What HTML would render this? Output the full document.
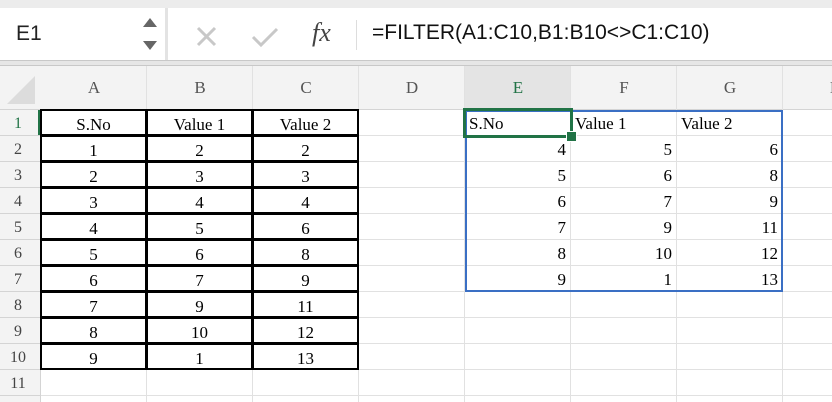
<!DOCTYPE html><html><head><style>
body{margin:0;width:832px;height:402px;overflow:hidden;background:#fff;font-family:"Liberation Serif",serif;position:relative}
.a{position:absolute}
.c{position:absolute;height:26px;line-height:28px;font-size:17px;color:#000;box-sizing:border-box}
</style></head><body>
<div class="a" style="left:0;top:0;width:832px;height:8px;background:#ececec"></div>
<div class="a" style="left:0;top:8px;width:832px;height:52px;background:#fff"></div>
<div class="a" style="left:165px;top:8px;width:3px;height:52px;background:#e3e3e3"></div>
<div class="a" style="left:0;top:60px;width:832px;height:6px;background:#e6e6e6;border-top:1px solid #c8c8c8;border-bottom:1px solid #c8c8c8;box-sizing:border-box"></div>
<div class="a" style="left:16px;top:22px;font:21px 'Liberation Sans',sans-serif;color:#222">E1</div>
<svg class="a" style="left:140px;top:14px" width="20" height="40"><path d="M3 13 L10 4 L17 13Z M3 27 L10 36 L17 27Z" fill="#666"/></svg>
<svg class="a" style="left:195px;top:25px" width="24" height="24"><path d="M3 3 L20 20 M20 3 L3 20" stroke="#c8c8c8" stroke-width="3"/></svg>
<svg class="a" style="left:250px;top:25px" width="30" height="24"><path d="M3 12 L11 20 L27 4" stroke="#c8c8c8" stroke-width="3" fill="none"/></svg>
<div class="a" style="left:312px;top:18px;font:italic 26px 'Liberation Serif',serif;color:#444">fx</div>
<div class="a" style="left:356px;top:20px;width:1px;height:30px;background:#ddd"></div>
<div class="a" style="left:372px;top:21px;font:21px 'Liberation Sans',sans-serif;color:#111">=FILTER(A1:C10,B1:B10&lt;&gt;C1:C10)</div>
<div class="a" style="left:0;top:66px;width:832px;height:44px;background:#f3f3f3;border-bottom:1px solid #d4d4d4;box-sizing:border-box"></div>
<div class="a" style="left:0;top:110px;width:41px;height:292px;background:#f3f3f3;border-right:1px solid #d4d4d4;box-sizing:border-box"></div>
<svg class="a" style="left:5px;top:74px" width="32" height="32"><path d="M30 2 L30 30 L2 30Z" fill="#dcdcdc"/></svg>
<div class="a" style="left:465px;top:66px;width:106px;height:44px;background:#e4e4e4;border-bottom:2px solid #217346;box-sizing:border-box"></div>
<div class="a" style="left:38px;top:110px;width:3px;height:26px;background:#217346"></div>
<div id="g"></div>
<script>
var h='';var cols=[41,147,253,359,465,571,677,783,889];var L='ABCDEFGH';
for(var i=0;i<8;i++){h+='<div class="a" style="left:'+cols[i]+'px;top:66px;width:106px;height:44px;line-height:44px;text-align:center;font-size:17px;color:'+(i==4?'#217346':'#555')+'">'+L[i]+'</div>';
h+='<div class="a" style="left:'+(cols[i+1]-1)+'px;top:66px;width:1px;height:336px;background:#e1e1e1"></div>';}
for(var r=0;r<11;r++){var y=110+r*26;h+='<div class="a" style="left:41px;top:'+(y+25)+'px;width:791px;height:1px;background:#e1e1e1"></div>';
h+='<div class="a" style="left:0;top:'+y+'px;width:36px;height:26px;line-height:28px;text-align:center;font-size:16px;color:'+(r==0?'#217346':'#444')+'">'+(r+1)+'</div>';
h+='<div class="a" style="left:0;top:'+(y+25)+'px;width:41px;height:1px;background:#d4d4d4"></div>';}
var A=[['S.No','Value 1','Value 2'],[1,2,2],[2,3,3],[3,4,4],[4,5,6],[5,6,8],[6,7,9],[7,9,11],[8,10,12],[9,1,13]];
for(var r=0;r<10;r++)for(var c=0;c<3;c++){h+='<div class="c" style="left:'+(cols[c]-1)+'px;top:'+(109+r*26)+'px;width:107px;height:27px;border:2px solid #000;text-align:center">'+A[r][c]+'</div>';}
var B=[['S.No','Value 1','Value 2'],[4,5,6],[5,6,8],[6,7,9],[7,9,11],[8,10,12],[9,1,13]];
for(var r=0;r<7;r++)for(var c=0;c<3;c++){h+='<div class="c" style="left:'+(cols[c+4]+4)+'px;top:'+(110+r*26)+'px;width:97px;text-align:'+(r?'right':'left')+'">'+B[r][c]+'</div>';}
h+='<div class="a" style="left:465px;top:110px;width:318px;height:182px;border:2px solid #3a6fc4;box-sizing:border-box"></div>';
h+='<div class="a" style="left:463px;top:108px;width:110px;height:30px;border:3px solid #217346;box-sizing:border-box"></div>';
h+='<div class="a" style="left:566px;top:131px;width:9px;height:9px;background:#217346;border:1px solid #fff"></div>';
document.getElementById('g').innerHTML=h;
</script>
</body></html>
